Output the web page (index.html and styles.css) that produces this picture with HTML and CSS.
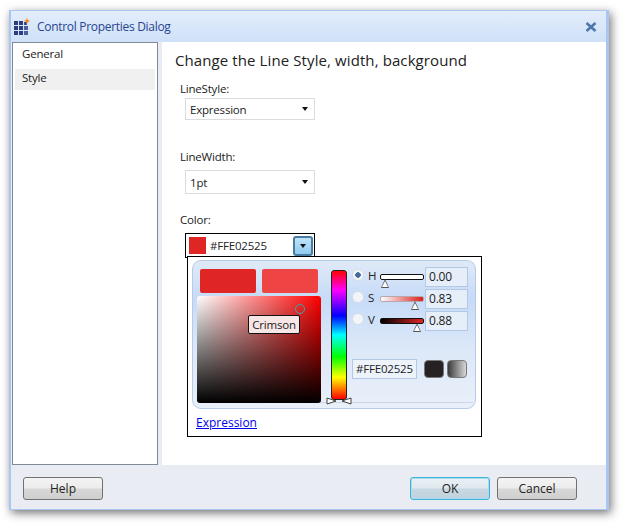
FILE: index.html
```html
<!DOCTYPE html>
<html lang="en">
<head>
  <meta charset="UTF-8">
  <title>Control Properties Dialog</title>
  <link rel="stylesheet" href="styles.css">
</head>
<body>
  <div class="window">
    <div class="titlebar">
      <svg class="app-icon" width="16" height="17" viewBox="0 0 16 17">
        <path fill="#2b3f7e" d="M0 3h4v4H0zM5 3h4v4H5zM0 8h4v4H0zM5 8h4v4H5zM0 13h4v4H0zM5 13h4v4H5z"/>
        <path fill="#4a5f9c" d="M10 8h4v4h-4zM10 13h4v4h-4z"/>
        <path fill="#3a4d8c" d="M10 4h3v3h-3z"/>
        <path fill="#f08a24" d="M13 0l1 2 2 1-2 1-1 2-1-2-2-1 2-1z"/>
      </svg>
      <span class="title">Control Properties Dialog</span>
      <svg class="close" width="12" height="10" viewBox="0 0 12 10">
        <path d="M1.5 1l9 8M10.5 1l-9 8" stroke="#4a77ad" stroke-width="2.6" fill="none"/>
      </svg>
    </div>

    <div class="main">
      <ul class="nav">
        <li>General</li>
        <li class="active">Style</li>
      </ul>

      <div class="content">
        <h1>Change the Line Style, width, background</h1>

        <div class="field field-style">
          <label>LineStyle:</label>
          <div class="select">Expression<span class="arrow"></span></div>
        </div>

        <div class="field field-width">
          <label>LineWidth:</label>
          <div class="select select-tall">1pt<span class="arrow"></span></div>
        </div>

        <div class="field field-color">
          <label>Color:</label>
          <div class="color-select">
            <span class="color-chip"></span>
            <span class="color-value">#FFE02525</span>
            <span class="drop-btn"><span class="arrow"></span></span>
          </div>
        </div>

        <div class="popup">
          <div class="picker">
            <div class="picker-left">
              <div class="swatches">
                <div class="swatch swatch-new"></div>
                <div class="swatch swatch-old"></div>
              </div>
              <div class="sv-square">
                <span class="sv-handle"></span>
                <span class="tooltip">Crimson</span>
              </div>
            </div>

            <div class="hue-col">
              <div class="hue-bar"></div>
              <svg class="hue-thumbs" width="26" height="8" viewBox="0 0 26 8">
                <path d="M1 1v6l9-3zM25 1v6l-9-3z" fill="#fff" stroke="#444"/>
              </svg>
            </div>

            <div class="picker-right">
              <div class="hsv-row">
                <span class="radio radio-on"></span>
                <span class="hsv-name">H</span>
                <div class="track track-h"><span class="thumb thumb-h"></span></div>
                <div class="num-box">0.00</div>
              </div>
              <div class="hsv-row">
                <span class="radio"></span>
                <span class="hsv-name">S</span>
                <div class="track track-s"><span class="thumb thumb-s"></span></div>
                <div class="num-box">0.83</div>
              </div>
              <div class="hsv-row">
                <span class="radio"></span>
                <span class="hsv-name">V</span>
                <div class="track track-v"><span class="thumb thumb-v"></span></div>
                <div class="num-box">0.88</div>
              </div>
              <div class="hex-row">
                <div class="hex-box">#FFE02525</div>
                <div class="dark-btn dark-solid"></div>
                <div class="dark-btn dark-grad"></div>
              </div>
            </div>
          </div>
          <a class="expr-link" href="#">Expression</a>
        </div>
      </div>
    </div>

    <div class="footer">
      <button class="btn">Help</button>
      <div class="footer-right">
        <button class="btn btn-default">OK</button>
        <button class="btn">Cancel</button>
      </div>
    </div>
  </div>
</body>
</html>
```

FILE: styles.css
```css
body {
  margin: 0;
  min-height: 100vh;
  overflow: hidden;
  background: #fff;
  font-family: "Open Sans", "Noto Sans", sans-serif;
  font-size: 11.5px;
  letter-spacing: -0.2px;
  color: #222;
}

.window {
  box-sizing: border-box;
  display: flex;
  flex-direction: column;
  width: 600px;
  height: 500px;
  margin: 10px 0 13px 9px;
  background: #e9edf3;
  border: 1px solid #a9c5f2;
  border-left-width: 2px;
  border-right-width: 3px;
  box-shadow: 2px 3px 9px rgba(0, 0, 0, 0.55);
}

.titlebar {
  display: flex;
  align-items: center;
  height: 31px;
  flex: none;
  padding: 0 9px 0 3px;
  background: linear-gradient(#e3edfb, #cfe1f8);
}

.app-icon {
  margin-right: 7px;
}

.title {
  flex: 1;
  color: #27458f;
  font-size: 12px;
  letter-spacing: -0.3px;
}

.main {
  display: flex;
  flex: 1;
  min-height: 0;
  padding-left: 1px;
  gap: 4px;
}

.nav {
  box-sizing: border-box;
  width: 146px;
  margin: 0;
  padding: 2px 2px;
  list-style: none;
  background: #fff;
  border: 1px solid #7f8a96;
}

.nav li {
  height: 21px;
  line-height: 18px;
  padding-left: 7px;
  margin-bottom: 3px;
}

.nav .active {
  background: #f0f0f0;
}

.content {
  position: relative;
  flex: 1;
  background: #fff;
}

h1 {
  margin: 0;
  padding: 8px 0 0 13px;
  height: 24px;
  font-size: 15px;
  line-height: 20px;
  font-weight: 400;
  letter-spacing: 0.1px;
}

.field {
  padding-left: 18px;
}

.field label {
  display: block;
  height: 17px;
  line-height: 15px;
}

.field-style {
  margin-top: 7px;
}

.field-width {
  margin-top: 29px;
}

.field-color {
  margin-top: 18px;
}

.select {
  box-sizing: border-box;
  display: flex;
  align-items: center;
  justify-content: space-between;
  width: 130px;
  height: 22px;
  margin: 0 0 0 5px;
  padding: 0 6px 0 4px;
  border: 1px solid #dcdcdc;
}

.select-tall {
  height: 24px;
  margin-top: 4px;
}

.arrow {
  display: block;
  width: 0;
  height: 0;
  border-left: 3.5px solid transparent;
  border-right: 3.5px solid transparent;
  border-top: 4px solid #111;
}

.color-select {
  box-sizing: border-box;
  display: flex;
  align-items: center;
  width: 130px;
  height: 25px;
  margin: 4px 0 0 5px;
  padding: 0 1px 0 3px;
  border: 1px solid #000;
}

.color-chip {
  width: 17px;
  height: 17px;
  background: #e02525;
  margin-right: 4px;
}

.color-value {
  flex: 1;
}

.drop-btn {
  box-sizing: border-box;
  display: flex;
  align-items: center;
  justify-content: center;
  width: 20px;
  height: 20px;
  background: linear-gradient(#bfe3f8, #8fcaf0);
  border: 2px solid #4a7ba0;
  border-radius: 3px;
}

.popup {
  position: absolute;
  left: 25px;
  top: 214px;
  box-sizing: border-box;
  width: 295px;
  height: 181px;
  padding: 3px 5px 0 4px;
  background: #fff;
  border: 1px solid #000;
}

.picker {
  position: relative;
  box-sizing: border-box;
  display: flex;
  height: 149px;
  padding: 8px 4px 5px 4px;
  background: linear-gradient(#e0eaf7, #c6dbf8 25%, #dce8f8 60%, #e9f0f9);
  border: 1px solid #b5cbe8;
  border-radius: 9px;
}

.picker::after {
  content: "";
  position: absolute;
  left: 6px;
  right: 2px;
  bottom: 5px;
  height: 1px;
  background: #c9d7e8;
}

.picker-left {
  display: flex;
  flex-direction: column;
  width: 124px;
}

.swatches {
  display: flex;
  gap: 6px;
  padding-left: 3px;
  height: 24px;
  margin-bottom: 3px;
}

.swatch {
  width: 56px;
  height: 24px;
  border-radius: 2px;
}

.swatch-new {
  background: #e02525;
}

.swatch-old {
  background: #ee4444;
}

.sv-square {
  position: relative;
  z-index: 1;
  height: 108px;
  border-radius: 3px;
  background: linear-gradient(rgba(0, 0, 0, 0), #000), linear-gradient(to right, #fff, #f00);
}

.sv-handle {
  position: absolute;
  left: 98px;
  top: 8px;
  width: 8px;
  height: 8px;
  border: 1px solid #3aa7b0;
  border-radius: 50%;
}

.tooltip {
  position: absolute;
  left: 51px;
  top: 19px;
  box-sizing: border-box;
  width: 52px;
  height: 19px;
  line-height: 17px;
  text-align: center;
  background: #f6e6e6;
  border: 1px solid #111;
  border-radius: 2px;
  color: #222;
}

.hue-col {
  position: relative;
  z-index: 1;
  width: 16px;
  margin: 1px 5px 0 10px;
}

.hue-bar {
  height: 130px;
  border: 1px solid #222;
  border-radius: 3px;
  box-sizing: border-box;
  background: linear-gradient(#f00, #f0f 15%, #00f 35%, #0ff 50%, #0f0 67%, #ff0 83%, #f00);
}

.hue-thumbs {
  position: absolute;
  left: -5px;
  top: 127px;
}

.picker-right {
  flex: 1;
}

.hsv-row {
  display: flex;
  align-items: flex-start;
  height: 22px;
}

.radio {
  box-sizing: border-box;
  width: 12px;
  height: 12px;
  border: 1px solid #d5dde8;
  border-radius: 50%;
  background: #f3f5f8;
}

.radio-on {
  background: radial-gradient(#44699f 0 2.5px, #f3f5f8 3px);
}

.hsv-name {
  width: 12px;
  margin-left: 4px;
  line-height: 14px;
}

.track {
  position: relative;
  box-sizing: border-box;
  width: 44px;
  height: 6px;
  margin-top: 5px;
  border: 1px solid #111;
  border-radius: 2px;
}

.track-h {
  background: #fff;
}

.track-s {
  border-color: #b9a8a8;
  background: linear-gradient(to right, #fff, #d92020);
}

.track-v {
  background: linear-gradient(to right, #000, #e02525);
}

.thumb {
  position: absolute;
  top: 4px;
  width: 0;
  height: 0;
  border-left: 4px solid transparent;
  border-right: 4px solid transparent;
  border-bottom: 9px solid #555;
}

.thumb::after {
  content: "";
  position: absolute;
  left: -3px;
  top: 2px;
  border-left: 3px solid transparent;
  border-right: 3px solid transparent;
  border-bottom: 6px solid #fff;
}

.thumb-h {
  left: 0;
}

.thumb-s {
  left: 30px;
}

.thumb-v {
  left: 32px;
}

.num-box {
  box-sizing: border-box;
  width: 43px;
  height: 20px;
  margin: -2px 0 0 1px;
  padding-left: 3px;
  line-height: 18px;
  font-size: 12px;
  background: #e6eff9;
  border: 1px solid #b3c9e3;
}

.hex-row {
  display: flex;
  align-items: center;
  margin-top: 24px;
}

.hex-box {
  box-sizing: border-box;
  width: 65px;
  height: 20px;
  padding-left: 3px;
  line-height: 18px;
  white-space: nowrap;
  background: #edf3fb;
  border: 1px solid #b3c9e3;
  margin-right: 7px;
}

.dark-btn {
  box-sizing: border-box;
  width: 20px;
  height: 18px;
  border: 1px solid #777;
  border-radius: 4px;
  margin-right: 3px;
}

.dark-solid {
  background: #262224;
}

.dark-grad {
  background: linear-gradient(to right, #3a3a3a, #d8d8d8);
}

.expr-link {
  display: block;
  margin: 6px 0 0 4px;
  color: #0000ee;
  font-size: 12px;
  letter-spacing: 0;
  line-height: 16px;
}

.footer {
  box-sizing: border-box;
  display: flex;
  flex: none;
  justify-content: space-between;
  align-items: flex-start;
  height: 44px;
  padding: 12px 29px 0 12px;
}

.footer-right {
  display: flex;
  gap: 7px;
}

.btn {
  width: 80px;
  height: 23px;
  padding: 0;
  font-family: inherit;
  font-size: 12px;
  color: #222;
  background: linear-gradient(#f4f4f4 0, #ececec 48%, #d8d8d8 52%, #cfcfcf 100%);
  border: 1px solid #707070;
  border-radius: 3px;
}

.btn-default {
  background: linear-gradient(#eaf1f5 0, #dfe8ee 48%, #c9d8e2 52%, #c0d2de 100%);
  border-color: #3fb4d6;
  box-shadow: inset 0 0 0 1px #a8dcec;
}
```
